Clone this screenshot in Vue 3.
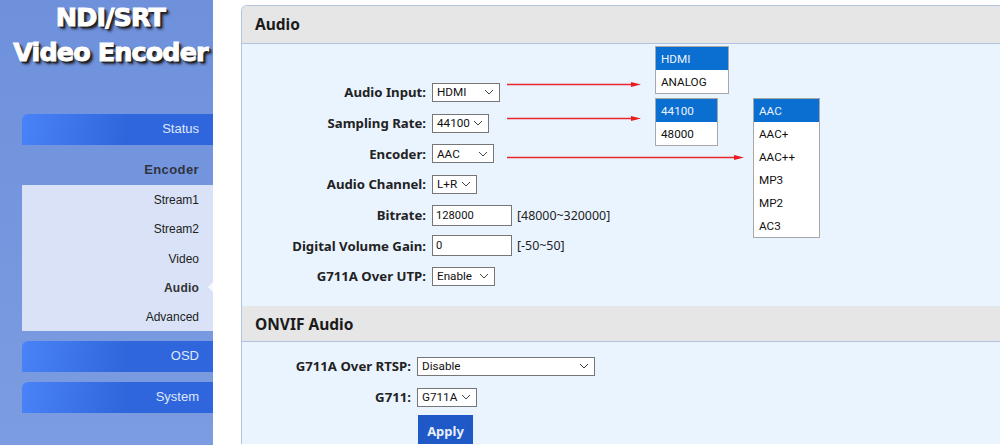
<script setup>
const navTop = ['Stream1', 'Stream2', 'Video', 'Audio', 'Advanced']
const audioRows = [
  { label: 'Audio Input:', value: 'HDMI', width: 68 },
  { label: 'Sampling Rate:', value: '44100', width: 57 },
  { label: 'Encoder:', value: 'AAC', width: 62 },
  { label: 'Audio Channel:', value: 'L+R', width: 45 },
  { label: 'Bitrate:', input: '128000', hint: '[48000~320000]' },
  { label: 'Digital Volume Gain:', input: '0', hint: '[-50~50]' },
  { label: 'G711A Over UTP:', value: 'Enable', width: 63 },
]
const onvifRows = [
  { label: 'G711A Over RTSP:', value: 'Disable', width: 178 },
  { label: 'G711:', value: 'G711A', width: 60 },
]
const popups = [
  { id: 'a', items: ['HDMI', 'ANALOG'], left: 655, top: 46, width: 74 },
  { id: 'b', items: ['44100', '48000'], left: 655, top: 98, width: 63 },
  { id: 'c', items: ['AAC', 'AAC+', 'AAC++', 'MP3', 'MP2', 'AC3'], left: 753, top: 98, width: 67 },
]
const arrows = [
  { y: 84.5, x2: 641 },
  { y: 118.5, x2: 641 },
  { y: 157.5, x2: 744 },
]
function popStyle(p) {
  return { left: p.left + 'px', top: p.top + 'px', width: p.width + 'px' }
}
function widthStyle(r) {
  return { width: r.width + 'px' }
}
</script>

<template>
  <div class="page">
    <aside class="side">
      <div class="logo">
        <div>NDI/SRT</div>
        <div>Video Encoder</div>
      </div>
      <div class="nav-btn">Status</div>
      <div class="nav-head">Encoder</div>
      <ul class="sub">
        <li v-for="n in navTop" :key="n" :class="{ on: n === 'Audio' }">{{ n }}</li>
      </ul>
      <div class="nav-btn osd">OSD</div>
      <div class="nav-btn sys">System</div>
    </aside>

    <main class="main">
      <section class="panel">
        <h2 class="head">Audio</h2>
        <div class="body first">
          <template v-for="r in audioRows" :key="r.label">
            <label>{{ r.label }}</label>
            <div v-if="r.input !== undefined" class="ctl">
              <input :value="r.input" /><span>{{ r.hint }}</span>
            </div>
            <div v-else class="select" :style="widthStyle(r)">
              <span>{{ r.value }}</span>
              <svg width="10" height="6" viewBox="0 0 10 6"><path d="M1 1l4 4 4-4" fill="none" stroke="#444" stroke-width="1" /></svg>
            </div>
          </template>
        </div>
        <h2 class="head second">ONVIF Audio</h2>
        <div class="body onvif">
          <template v-for="r in onvifRows" :key="r.label">
            <label>{{ r.label }}</label>
            <div class="select" :style="widthStyle(r)">
              <span>{{ r.value }}</span>
              <svg width="10" height="6" viewBox="0 0 10 6"><path d="M1 1l4 4 4-4" fill="none" stroke="#444" stroke-width="1" /></svg>
            </div>
          </template>
          <span></span>
          <button class="apply">Apply</button>
        </div>
      </section>
    </main>

    <svg class="arrows" width="1000" height="445" viewBox="0 0 1000 445">
      <g v-for="a in arrows" :key="a.y">
        <line x1="507" :y1="a.y" :x2="a.x2 - 8" :y2="a.y" stroke="#e8262b" stroke-width="1.4" />
        <polygon :points="`${a.x2 - 10},${a.y - 2.5} ${a.x2},${a.y} ${a.x2 - 10},${a.y + 2.5}`" fill="#ea1c20" />
      </g>
    </svg>

    <ul v-for="p in popups" :key="p.id" class="pop" :style="popStyle(p)">
      <li v-for="(it, i) in p.items" :key="it" :class="{ sel: i === 0 }">{{ it }}</li>
    </ul>
  </div>
</template>

<style>
html, body { margin: 0; background: #fff; overflow: hidden; }
</style>

<style scoped>
.page {
  position: relative;
  display: flex;
  width: 1000px;
  height: 445px;
  overflow: hidden;
  background: #fff;
  font-family: "Liberation Sans", Arial, sans-serif;
}
.side {
  flex: none;
  width: 213px;
  height: 445px;
  box-sizing: border-box;
  background: linear-gradient(180deg, #6f91dc 0%, #7b9ce0 100%);
  padding-left: 22px;
}
.logo {
  height: 114px;
  margin-left: -22px;
  box-sizing: border-box;
  padding-left: 8px;
  text-align: center;
  color: #fff;
  font-family: "DejaVu Sans", sans-serif;
  font-weight: 700;
  font-size: 25.5px;
  letter-spacing: -0.9px;
  line-height: 35px;
  text-shadow: 1px 1px 0 #222, 2px 2px 1px #222, 3px 3px 3px #223;
  -webkit-text-stroke: 1px #fff;
  white-space: nowrap;
  overflow: hidden;
}
.nav-btn {
  height: 31px;
  line-height: 30px;
  padding-right: 14px;
  text-align: right;
  font-size: 13px;
  color: #dfe8fb;
  background: linear-gradient(100deg, #4a82f8 0%, #2f66dc 55%, #2f66dd 100%);
  border-top-left-radius: 6px;
}
.nav-head {
  height: 40px;
  line-height: 49px;
  padding-right: 14px;
  text-align: right;
  font-size: 13px;
  font-weight: 700;
  letter-spacing: 0.4px;
  color: #2f3340;
}
.sub {
  list-style: none;
  margin: 0;
  padding: 0;
  height: 146px;
  background: #d9e2f7;
}
.sub li {
  position: relative;
  height: 29.3px;
  line-height: 31px;
  padding-right: 14px;
  text-align: right;
  font-size: 12px;
  color: #222;
}
.sub li.on { font-weight: 700; color: #333; letter-spacing: 0.2px; }
.sub li.on::after {
  content: "";
  position: absolute;
  right: 0;
  top: 9px;
  border: 5px solid transparent;
  border-right-color: #f5f8fe;
  border-left-width: 0;
}
.osd { margin-top: 10px; }
.sys { margin-top: 10px; }

.main {
  flex: 1;
  min-width: 0;
  padding: 5px 0 0 28px;
}
.panel {
  width: 780px;
  border: 1px solid #b3c3de;
  border-right: 0;
  border-bottom: 0;
  border-top-left-radius: 6px;
  background: #eaf4ff;
  overflow: hidden;
}
.head {
  margin: 0;
  height: 37px;
  line-height: 37px;
  padding-left: 13px;
  background: #e6e6e6;
  border-bottom: 1px solid #b3c3de;
  font-family: "Noto Sans", sans-serif;
  font-size: 15.5px;
  font-weight: 700;
  color: #1b1b1b;
}
.head.second { height: 35px; line-height: 37px; }
.body {
  display: grid;
  grid-template-columns: 184px 1fr;
  column-gap: 6px;
  align-items: center;
  grid-auto-rows: 30.7px;
  padding: 33px 0 14px;
}
.body.onvif {
  grid-template-columns: 169px 1fr;
  grid-auto-rows: 31px;
  padding: 9px 0 0;
}
label {
  text-align: right;
  font-family: "Noto Sans", sans-serif;
  font-size: 13.2px;
  font-weight: 700;
  color: #222;
  white-space: nowrap;
}
.select {
  box-sizing: border-box;
  display: flex;
  align-items: center;
  justify-content: space-between;
  height: 19px;
  padding: 0 5px 0 4px;
  background: #fff;
  border: 1px solid #767676;
  font-family: Roboto, sans-serif;
  font-size: 11.7px;
  color: #111;
}
input {
  box-sizing: border-box;
  display: block;
  margin: 0;
  width: 80px;
  height: 21px;
  padding: 0 3px;
  outline: none;
  background: #fff;
  border: 1px solid #767676;
  border-radius: 0;
  font-family: Roboto, sans-serif;
  font-size: 11.2px;
  color: #111;
}
.ctl {
  display: flex;
  align-items: center;
  gap: 5px;
  font-family: "Noto Sans", sans-serif;
  font-size: 12.4px;
  color: #222;
}
.apply {
  display: block;
  width: 55px;
  height: 32px;
  margin: 6px 0 0 1px;
  border: 0;
  padding: 0;
  background: #1f58c7;
  color: #e8effc;
  font-family: "Noto Sans", sans-serif;
  font-size: 13px;
  font-weight: 700;
}
.arrows {
  position: absolute;
  left: 0;
  top: 0;
  pointer-events: none;
}
.pop {
  position: absolute;
  box-sizing: border-box;
  list-style: none;
  margin: 0;
  padding: 0;
  background: #fff;
  border: 1px solid #a8a8a8;
  font-family: Roboto, sans-serif;
  font-size: 11.7px;
  color: #111;
}
.pop li {
  height: 23px;
  line-height: 24px;
  padding-left: 5px;
}
.pop li.sel {
  background: #0a6fd0;
  color: #eaf3fd;
}
</style>
